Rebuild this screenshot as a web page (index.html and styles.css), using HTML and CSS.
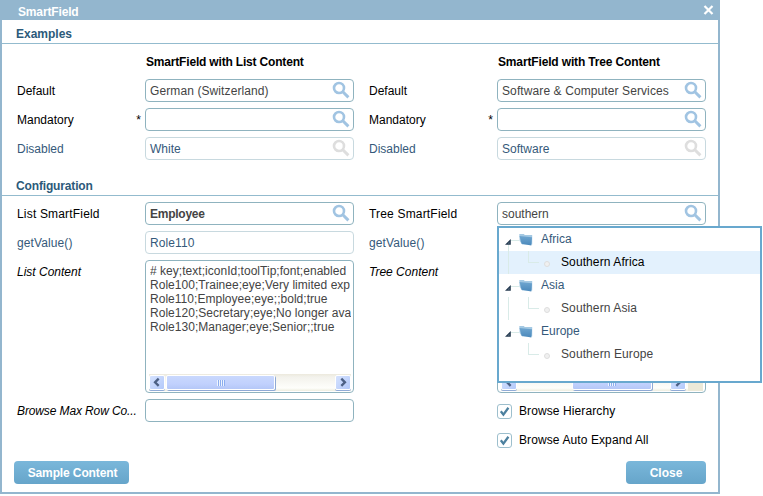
FILE: index.html
```html
<!DOCTYPE html>
<html lang="en">
<head>
<meta charset="utf-8">
<title>SmartField</title>
<link rel="stylesheet" href="styles.css">
</head>
<body>
<svg class="defs" width="0" height="0" aria-hidden="true">
  <defs>
    <linearGradient id="folderFill" x1="0" y1="0" x2="0" y2="1"><stop offset="0" stop-color="#6fa6d0"/><stop offset="1" stop-color="#4a88bb"/></linearGradient>
    <symbol id="lens" viewBox="0 0 18 18"><circle cx="7" cy="7" r="5" fill="none" stroke="currentColor" stroke-width="2.6"/><path d="M10.8 10.8L16.4 16.4" stroke="currentColor" stroke-width="3"/></symbol>
    <symbol id="folder" viewBox="0 0 14 13"><path d="M0.3 1h4.5l1 1h7.4v9.5H3.2L0.6 8z" fill="#a4c9e3"/><path d="M0.5 3L13 4.3L12.3 12.6L2.6 10.8z" fill="url(#folderFill)"/></symbol>
    <symbol id="arrow" viewBox="0 0 6 6"><path d="M5.8 0V5.8H0z" fill="#24394f"/><path d="M4.4 3v1.5H2.9z" fill="#7c91a5"/></symbol>
    <symbol id="tick" viewBox="0 0 13 13"><path d="M2.8 6.2L5.4 9.6L10.4 2.8" fill="none" stroke="#4d819f" stroke-width="2.3"/></symbol>
    <symbol id="chevL" viewBox="0 0 14 14"><path d="M8.8 2.9L4.9 6.8L8.8 10.7" fill="none" stroke="#4d6185" stroke-width="2.5"/></symbol>
    <symbol id="chevR" viewBox="0 0 14 14"><path d="M5.2 2.9L9.1 6.8L5.2 10.7" fill="none" stroke="#4d6185" stroke-width="2.5"/></symbol>
  </defs>
</svg>
<main class="dialog">
  <header class="titlebar"><span class="t-title">SmartField</span>
    <svg class="close-x" viewBox="0 0 10 10"><path d="M1 1L9 9M9 1L1 9" stroke="#fff" stroke-width="2.2"/></svg>
  </header>
  <h2 class="section">Examples</h2>
  <section class="form examples">
    <div class="head-row">
      <strong class="t-head1">SmartField with List Content</strong>
      <strong class="t-head2">SmartField with Tree Content</strong>
    </div>
    <label class="lbl">Default</label>
    <div class="field"><span class="t-wide">German (Switzerland)</span><svg class="lens"><use href="#lens"/></svg></div>
    <label class="lbl">Default</label>
    <div class="field"><span class="t-wide">Software &amp; Computer Services</span><svg class="lens"><use href="#lens"/></svg></div>
    <label class="lbl">Mandatory<i class="req">*</i></label>
    <div class="field"><span></span><svg class="lens"><use href="#lens"/></svg></div>
    <label class="lbl">Mandatory<i class="req">*</i></label>
    <div class="field"><span></span><svg class="lens"><use href="#lens"/></svg></div>
    <label class="lbl off">Disabled</label>
    <div class="field off"><span>White</span><svg class="lens"><use href="#lens"/></svg></div>
    <label class="lbl off">Disabled</label>
    <div class="field off"><span>Software</span><svg class="lens"><use href="#lens"/></svg></div>
  </section>
  <h2 class="section t-config">Configuration</h2>
  <section class="form config">
    <label class="lbl"><span class="t-list">List SmartField</span></label>
    <div class="field"><b class="t-bold">Employee</b><svg class="lens"><use href="#lens"/></svg></div>
    <label class="lbl"><span class="t-list">Tree SmartField</span></label>
    <div class="field anchor"><span>southern</span><svg class="lens"><use href="#lens"/></svg>
      <div class="popup">
        <div class="node trunk below"><svg class="arrow"><use href="#arrow"/></svg><i class="dash"></i><svg class="folder"><use href="#folder"/></svg><span>Africa</span></div>
        <div class="node leaf selected trunk"><i class="elbow"></i><i class="dot"></i><span class="t-wide">Southern Africa</span></div>
        <div class="node"><svg class="arrow"><use href="#arrow"/></svg><i class="dash"></i><svg class="folder"><use href="#folder"/></svg><span>Asia</span></div>
        <div class="node leaf trunk"><i class="elbow"></i><i class="dot"></i><span class="t-wide">Southern Asia</span></div>
        <div class="node"><svg class="arrow"><use href="#arrow"/></svg><i class="dash"></i><svg class="folder"><use href="#folder"/></svg><span>Europe</span></div>
        <div class="node leaf"><i class="elbow"></i><i class="dot"></i><span class="t-wide">Southern Europe</span></div>
      </div>
    </div>
    <label class="lbl off"><span class="t-wide">getValue()</span></label>
    <div class="field off"><span class="t-wide">Role110</span></div>
    <label class="lbl off"><span class="t-wide">getValue()</span></label>
    <div class="field off"></div>
    <label class="lbl em">List Content</label>
    <div class="area">
      <pre># key;text;iconId;toolTip;font;enabled
Role100;Trainee;eye;Very limited exp
Role110;Employee;eye;;bold;true
Role120;Secretary;eye;No longer ava
Role130;Manager;eye;Senior;;true</pre>
      <div class="scroll"><svg class="sbtn"><use href="#chevL"/></svg><i class="thumb"><i class="grip"></i></i><svg class="sbtn end"><use href="#chevR"/></svg></div>
    </div>
    <label class="lbl em">Tree Content</label>
    <div class="area">
      <pre></pre>
      <div class="scroll second"><svg class="sbtn"><use href="#chevL"/></svg><i class="thumb"><i class="grip"></i></i><svg class="sbtn end"><use href="#chevR"/></svg><i class="corner"></i></div>
    </div>
    <label class="lbl em"><span class="t-browse">Browse Max Row Co...</span></label>
    <div class="field"></div>
    <span></span>
    <div class="check"><svg class="box"><use href="#tick"/></svg><span class="t-wide">Browse Hierarchy</span></div>
    <span></span><span></span><span></span>
    <div class="check"><svg class="box"><use href="#tick"/></svg><span class="t-wide">Browse Auto Expand All</span></div>
  </section>
  <footer class="buttons"><button class="btn sample">Sample Content</button><button class="btn close">Close</button></footer>
</main>
</body>
</html>
```
FILE: styles.css
```css
* { box-sizing: border-box; }
body { margin: 0; background: #fff; font: 12px/14px "Liberation Sans", Arial, sans-serif; color: #000; }
i { font-style: normal; }
.defs { position: absolute; }
.dialog { width: 720px; height: 494px; border: 2px solid #93b6ce; border-top: 0; background: #fff; }
.titlebar { height: 20px; background: #93b6ce; display: flex; justify-content: space-between; align-items: center; padding: 3px 4px 0 16px; color: #fff; font-weight: bold; }
.close-x { width: 11px; height: 10px; margin-top: -3px; }
.section { margin: 0; height: 24px; border-bottom: 1px solid #93bbce; padding: 7px 14px 0; font-size: 12px; line-height: 14px; color: #2c5a7a; }

/* letter fitting */
.t-title, .t-config { letter-spacing: -0.15px; }
.t-head1 { letter-spacing: -0.18px; }
.t-head2 { letter-spacing: -0.15px; }
.t-wide { letter-spacing: 0.1px; }
.t-list { letter-spacing: 0.18px; }
.t-bold { letter-spacing: -0.25px; }
.t-browse { letter-spacing: -0.12px; }

.form { display: grid; grid-template-columns: 128px 224px 128px 209px; row-gap: 6px; padding: 0 12px 0 15px; }
.examples { height: 128px; grid-template-rows: 29px 23px 23px 23px; }
.config { height: 265px; padding-top: 6px; grid-template-rows: 23px 23px 133px 23px 23px; }
.head-row { grid-column: 1 / -1; display: grid; grid-template-columns: 352px 208px; padding: 11px 0 0 129px; }
.lbl { display: flex; align-items: center; justify-content: space-between; height: 23px; padding-right: 4px; padding-top: 1px; white-space: nowrap; }
.em { font-style: italic; }
.lbl.off, .field.off { color: #35597a; }
.field { width: 209px; height: 23px; border: 1px solid #8fb3bf; border-radius: 4px; display: flex; align-items: center; justify-content: space-between; padding: 1px 3px 0 4px; color: #444; background: #fff; white-space: nowrap; }
.field.off { border-color: #c8d9df; }
.lens { width: 18px; height: 18px; color: #a1c4e2; margin-top: -2px; }
.off .lens { color: #dedede; }

.anchor { position: relative; }
.popup { position: absolute; z-index: 2; left: -1px; top: 23px; width: 265px; height: 157px; border: 2px solid #68a8ce; background: #fff; }
.node { height: 23px; display: flex; align-items: center; padding: 0 0 1px 6px; color: #35597a; }
.arrow { width: 6px; height: 6px; margin-top: 5px; }
.dash { width: 8px; height: 1px; background: #d9ebe8; margin-top: 2px; }
.folder { width: 14px; height: 13px; margin: 1px 8px 0 0; }
.leaf { color: #444; padding-left: 29px; }
.trunk { background: linear-gradient(#d9ebe8, #d9ebe8) 9px 0 / 1px 100% no-repeat; }
.trunk.below { background-position: 9px 16px; }
.selected { background-color: #e3f1fd; color: #000; }
.elbow { width: 11px; height: 12px; border: solid #d9ebe8; border-width: 0 0 1px 1px; margin-top: -10px; }
.dot { width: 6px; height: 6px; border: 1px solid #dedede; border-radius: 3px; background: #f0f0f0; margin: 3px 11px 0 5px; }

.area { width: 209px; height: 133px; border: 1px solid #8fb3bf; border-radius: 4px; color: #444; padding: 3px 2px 1px 4px; display: flex; flex-direction: column; justify-content: space-between; }
pre { font: inherit; margin: 0; overflow: hidden; letter-spacing: 0.03px; }
.scroll { height: 17px; margin-left: -1px; display: flex; align-items: center; background: linear-gradient(#ece9dd, #f3f2ec 3px, #fefefb 14px, #eeeddf); }
.sbtn { width: 16px; height: 15px; border: 1px solid #fff; border-radius: 2px; background: linear-gradient(135deg, #d5e2fe, #b3c9fa); box-shadow: 0 1px 0 #91abd7; flex: none; }
.thumb { width: 109px; height: 15px; margin-left: 1px; border: 1px solid #fff; border-radius: 2px; background: linear-gradient(#c9d8fd, #c1d1fd 60%, #b4c7f7); box-shadow: 1px 1px 0 #8fa9d5; display: flex; align-items: center; justify-content: center; flex: none; }
.grip { width: 8px; height: 6px; background: repeating-linear-gradient(90deg, #eef4fe 0 1px, #8caeef 1px 2px); }
.end { margin-left: auto; }
.second .thumb { width: 80px; margin-left: 55px; }
.second .end { margin-left: 18px; }
.corner { flex: 1; height: 17px; margin-left: 2px; background: #ece9d8; }

.check { display: flex; align-items: center; gap: 7px; padding-top: 1px; white-space: nowrap; }
.box { width: 15px; height: 15px; border: 1px solid #9dbfcd; border-radius: 3px; }
.buttons { display: flex; justify-content: space-between; padding: 0 12px; }
.btn { height: 23px; border: 0; border-radius: 4px; padding: 1px 0 0; color: #fff; background: linear-gradient(#7ab7da, #66a5ca); font: bold 12px/14px "Liberation Sans", Arial, sans-serif; }
.sample { width: 115px; padding-left: 2px; letter-spacing: -0.12px; }
.close { width: 80px; }
```
